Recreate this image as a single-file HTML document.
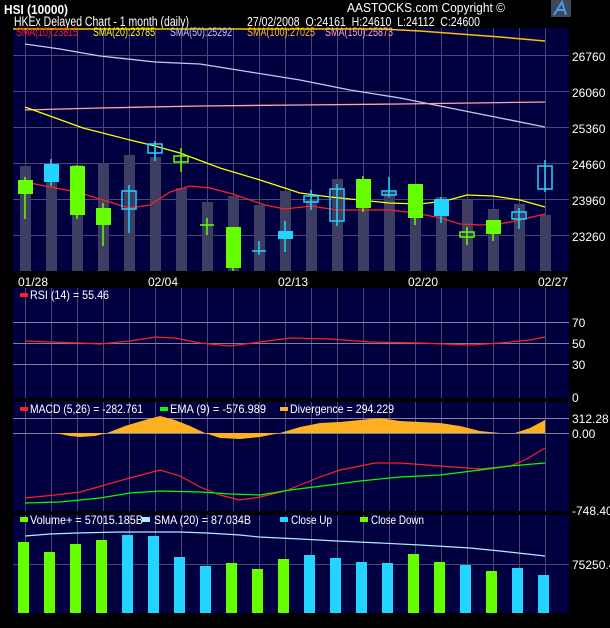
<!DOCTYPE html>
<html><head><meta charset="utf-8"><style>
html,body{margin:0;padding:0;background:#000;}
svg{display:block;font-family:"Liberation Sans",sans-serif;}
</style></head><body>
<svg width="610" height="628" viewBox="0 0 610 628" xmlns="http://www.w3.org/2000/svg">
<rect width="610" height="628" fill="#000"/>
<!-- header -->
<text x="4" y="14" fill="#fff" font-size="13" font-weight="bold" textLength="64" lengthAdjust="spacingAndGlyphs">HSI (10000)</text>
<text x="14" y="26" fill="#fff" font-size="13.5" textLength="175" lengthAdjust="spacingAndGlyphs">HKEx  Delayed Chart - 1 month (daily)</text>
<text x="347" y="12" fill="#fff" font-size="13" textLength="158" lengthAdjust="spacingAndGlyphs">AASTOCKS.com Copyright ©</text>
<rect x="551" y="0" width="20" height="17" fill="#3a4a5a"/>
<path d="M554 15 L562 2 L566 15 M557 10 L565 10" stroke="#4a9ae8" stroke-width="2" fill="none"/>
<text x="247" y="26" fill="#fff" font-size="13" textLength="233" lengthAdjust="spacingAndGlyphs" xml:space="preserve">27/02/2008  O:24161  H:24610  L:24112  C:24600</text>

<!-- panels -->
<rect x="13" y="28" width="556" height="243" fill="#000040"/>
<rect x="13" y="288" width="556" height="110" fill="#000040"/>
<rect x="13" y="402" width="556" height="109" fill="#000040"/>
<rect x="13" y="515" width="556" height="98" fill="#000040"/>

<g stroke="#4a4a70" stroke-width="1">
<path d="M25.5 28V271M51.5 28V271M77.5 28V271M103.5 28V271M129.5 28V271M155.5 28V271M181.5 28V271M207.5 28V271M233.5 28V271M259.5 28V271M285.5 28V271M311.5 28V271M337.5 28V271M363.5 28V271M389.5 28V271M415.5 28V271M441.5 28V271M467.5 28V271M493.5 28V271M519.5 28V271M545.5 28V271"/>
<path d="M25.5 288V398M51.5 288V398M77.5 288V398M103.5 288V398M129.5 288V398M155.5 288V398M181.5 288V398M207.5 288V398M233.5 288V398M259.5 288V398M285.5 288V398M311.5 288V398M337.5 288V398M363.5 288V398M389.5 288V398M415.5 288V398M441.5 288V398M467.5 288V398M493.5 288V398M519.5 288V398M545.5 288V398"/>
<path d="M25.5 402V511M51.5 402V511M77.5 402V511M103.5 402V511M129.5 402V511M155.5 402V511M181.5 402V511M207.5 402V511M233.5 402V511M259.5 402V511M285.5 402V511M311.5 402V511M337.5 402V511M363.5 402V511M389.5 402V511M415.5 402V511M441.5 402V511M467.5 402V511M493.5 402V511M519.5 402V511M545.5 402V511"/>
<path d="M25.5 515V613M51.5 515V613M77.5 515V613M103.5 515V613M129.5 515V613M155.5 515V613M181.5 515V613M207.5 515V613M233.5 515V613M259.5 515V613M285.5 515V613M311.5 515V613M337.5 515V613M363.5 515V613M389.5 515V613M415.5 515V613M441.5 515V613M467.5 515V613M493.5 515V613M519.5 515V613M545.5 515V613"/>
<path d="M13 55.5H569M13 91.5H569M13 127.5H569M13 163.5H569M13 199.5H569M13 235.5H569"/>
<path d="M13 564.5H569"/>
</g>
<g stroke="#8080a0"><path d="M13 322.5H569M13 343.5H569M13 364.5H569M13 418.5H569M13 433.5H569"/></g>

<!-- volume in main -->
<g fill="#3e3e62">
<rect x="20" y="166" width="11" height="105"/><rect x="46" y="181" width="11" height="90"/><rect x="72" y="165" width="11" height="106"/><rect x="98" y="163" width="11" height="108"/><rect x="124" y="155" width="11" height="116"/><rect x="150" y="157" width="11" height="114"/><rect x="176" y="188" width="11" height="83"/><rect x="202" y="202" width="11" height="69"/><rect x="228" y="196" width="11" height="75"/><rect x="254" y="205" width="11" height="66"/><rect x="280" y="191" width="11" height="80"/><rect x="306" y="199" width="11" height="72"/><rect x="332" y="179" width="11" height="92"/><rect x="358" y="190" width="11" height="81"/><rect x="384" y="192" width="11" height="79"/><rect x="410" y="197" width="11" height="74"/><rect x="436" y="197" width="11" height="74"/><rect x="462" y="200" width="11" height="71"/><rect x="488" y="209" width="11" height="62"/><rect x="514" y="204" width="11" height="67"/><rect x="540" y="215" width="11" height="56"/>
</g>

<!-- MAs -->
<polyline fill="none" stroke="#ffc000" stroke-width="1.5" points="13,29 380,29 420,31 460,34 500,37 545,41"/>
<polyline fill="none" stroke="#c8c8f0" stroke-width="1.3" points="25,44 60,49 100,56 155,62 200,64 250,72 300,80 350,90 400,98 430,104 460,110 500,118 545,127"/>
<polyline fill="none" stroke="#ffa8a8" stroke-width="1.3" points="25,110 100,108 200,106 300,105 400,104 545,102"/>
<polyline fill="none" stroke="#ffff00" stroke-width="1.3" points="25,107 83,128 130,140 155,146 180,153 220,168 260,180 300,193 330,197 360,200 389,203 420,204 445,201 467,195 493,196 520,200 545,207"/>
<polyline fill="none" stroke="#ff2020" stroke-width="1.3" points="25,182 50,187 77,192 103,200 129,208 150,205 170,192 190,186 210,188 233,194 250,200 265,205 285,209 311,206 337,210 363,210 389,210 415,213 441,218 460,224 480,225 500,224 520,220 545,214"/>

<!-- candles -->
<g stroke-width="1.5">
<path d="M25 177V219" stroke="#66ff00"/><rect x="18" y="180" width="15" height="14" fill="#66ff00"/>
<path d="M51 159V186" stroke="#22d4ff"/><rect x="44" y="164" width="15" height="18" fill="#22d4ff"/>
<path d="M77 165V219" stroke="#66ff00"/><rect x="70" y="166" width="15" height="49" fill="#66ff00"/>
<path d="M103 203V246" stroke="#66ff00"/><rect x="96" y="208" width="15" height="17" fill="#66ff00"/>
<path d="M129 185V233" stroke="#22d4ff"/><rect x="122" y="191" width="14" height="18" fill="none" stroke="#22d4ff"/>
<path d="M155 141V161" stroke="#22d4ff"/><rect x="148" y="144" width="14" height="9" fill="none" stroke="#22d4ff"/>
<path d="M181 148V172" stroke="#66ff00"/><rect x="174" y="156" width="14" height="6" fill="none" stroke="#66ff00"/>
<path d="M207 218V235M200 225H214" stroke="#66ff00"/>
<path d="M233 265V271" stroke="#66ff00"/><rect x="226" y="227" width="15" height="41" fill="#66ff00"/>
<path d="M259 241V255M252 251H266" stroke="#22d4ff"/>
<path d="M285 221V252" stroke="#22d4ff"/><rect x="278" y="231" width="15" height="8" fill="#22d4ff"/>
<path d="M311 190V210" stroke="#22d4ff"/><rect x="304" y="196" width="14" height="6" fill="none" stroke="#22d4ff"/>
<path d="M337 184V226" stroke="#22d4ff"/><rect x="330" y="189" width="14" height="32" fill="none" stroke="#22d4ff"/>
<path d="M363 176V212" stroke="#66ff00"/><rect x="356" y="179" width="15" height="29" fill="#66ff00"/>
<path d="M389 177V197" stroke="#22d4ff"/><rect x="382" y="191" width="14" height="4" fill="none" stroke="#22d4ff"/>
<path d="M415 184V225" stroke="#66ff00"/><rect x="408" y="184" width="15" height="34" fill="#66ff00"/>
<path d="M441 197V223" stroke="#22d4ff"/><rect x="434" y="199" width="15" height="17" fill="#22d4ff"/>
<path d="M467 227V245" stroke="#66ff00"/><rect x="460" y="232" width="14" height="5" fill="none" stroke="#66ff00"/>
<path d="M493 220V241" stroke="#66ff00"/><rect x="486" y="220" width="15" height="14" fill="#66ff00"/>
<path d="M519 208V229" stroke="#22d4ff"/><rect x="512" y="212" width="14" height="7" fill="none" stroke="#22d4ff"/>
<path d="M545 160V192" stroke="#22d4ff"/><rect x="538" y="166" width="14" height="23" fill="none" stroke="#22d4ff"/>
</g>

<!-- main legend -->
<g font-size="11.5">
<text x="16" y="36" fill="#ff2020" textLength="62" lengthAdjust="spacingAndGlyphs">SMA(10):23815</text>
<text x="93" y="36" fill="#ffff00" textLength="62" lengthAdjust="spacingAndGlyphs">SMA(20):23785</text>
<text x="170" y="36" fill="#c8c8f0" textLength="62" lengthAdjust="spacingAndGlyphs">SMA(50):25292</text>
<text x="247" y="36" fill="#ffc000" textLength="68" lengthAdjust="spacingAndGlyphs">SMA(100):27025</text>
<text x="325" y="36" fill="#ffa8a8" textLength="68" lengthAdjust="spacingAndGlyphs">SMA(150):25873</text>
</g>

<!-- axis labels -->
<g fill="#fff" font-size="12">
<text x="572" y="61">26760</text><text x="572" y="97">26060</text><text x="572" y="133">25360</text>
<text x="572" y="169">24660</text><text x="572" y="205">23960</text><text x="572" y="241">23260</text>
<text x="18" y="286">01/28</text><text x="148" y="286">02/04</text><text x="278" y="286">02/13</text><text x="408" y="286">02/20</text><text x="538" y="286">02/27</text>
<text x="572" y="327">70</text><text x="572" y="348">50</text><text x="572" y="369">30</text><text x="572" y="402">0</text>
<text x="572" y="423">312.28</text><text x="572" y="438">0.00</text><text x="572" y="515">-748.40</text>
<text x="572" y="569">75250.4</text>
</g>

<!-- RSI -->
<rect x="20" y="293" width="8" height="4" fill="#ff2020"/>
<text x="30" y="299" fill="#fff" font-size="12" textLength="79" lengthAdjust="spacingAndGlyphs">RSI (14)  = 55.46</text>
<polyline fill="none" stroke="#ff2020" stroke-width="1.2" points="25,341 50,342 80,343 100,344 130,341 155,337 175,338 200,343 230,346 260,342 290,338 330,339 370,342 420,343 470,345 500,343 530,340 545,337"/>

<!-- MACD -->
<rect x="20" y="407" width="8" height="4" fill="#ff2020"/>
<text x="30" y="413" fill="#fff" font-size="12" textLength="113" lengthAdjust="spacingAndGlyphs">MACD (5,26) = -282.761</text>
<rect x="160" y="407" width="8" height="4" fill="#00ff00"/>
<text x="170" y="413" fill="#fff" font-size="12" textLength="96" lengthAdjust="spacingAndGlyphs">EMA (9) = -576.989</text>
<rect x="280" y="407" width="8" height="4" fill="#ffb020"/>
<text x="290" y="413" fill="#fff" font-size="12" textLength="104" lengthAdjust="spacingAndGlyphs">Divergence = 294.229</text>
<polygon fill="#ffb020" points="30,433 55,433 70,436 80,437 95,436 107,433 125,426 145,420 160,416 175,420 190,426 205,433 220,438 240,439 260,437 280,433 300,427 320,423 340,422 360,420 380,418 400,421 420,422 440,423 460,426 480,431 500,433 515,433 530,428 545,420 545,433"/>
<polyline fill="none" stroke="#ff2020" stroke-width="1.2" points="25,498 55,495 80,492 105,485 130,478 160,470 180,476 200,487 220,495 240,500 260,497 285,491 300,485 320,477 340,470 375,463 400,463 440,466 480,469 510,466 525,460 545,448"/>
<polyline fill="none" stroke="#00ff00" stroke-width="1.2" points="25,503 60,502 100,498 130,493 160,491 200,492 230,494 260,495 290,490 330,485 360,481 400,477 440,475 480,470 510,466 545,463"/>

<!-- Volume panel -->
<rect x="20" y="517" width="8" height="5" fill="#66ff00"/>
<text x="30" y="524" fill="#fff" font-size="12" textLength="113" lengthAdjust="spacingAndGlyphs">Volume+  = 57015.185B</text>
<rect x="142" y="517" width="8" height="5" fill="#aaf0ff"/>
<text x="154" y="524" fill="#fff" font-size="12" textLength="97" lengthAdjust="spacingAndGlyphs">SMA (20)  = 87.034B</text>
<rect x="280" y="517" width="8" height="5" fill="#22d4ff"/>
<text x="291" y="524" fill="#fff" font-size="12" textLength="41" lengthAdjust="spacingAndGlyphs">Close Up</text>
<rect x="360" y="517" width="8" height="5" fill="#66ff00"/>
<text x="371" y="524" fill="#fff" font-size="12" textLength="53" lengthAdjust="spacingAndGlyphs">Close Down</text>
<g>
<rect x="18" y="542" width="11" height="71" fill="#66ff00"/><rect x="44" y="552" width="11" height="61" fill="#66ff00"/><rect x="70" y="544" width="11" height="69" fill="#66ff00"/><rect x="96" y="540" width="11" height="73" fill="#66ff00"/><rect x="122" y="535" width="11" height="78" fill="#22d4ff"/><rect x="148" y="536" width="11" height="77" fill="#22d4ff"/><rect x="174" y="557" width="11" height="56" fill="#22d4ff"/><rect x="200" y="566" width="11" height="47" fill="#22d4ff"/><rect x="226" y="563" width="11" height="50" fill="#66ff00"/><rect x="252" y="569" width="11" height="44" fill="#66ff00"/><rect x="278" y="559" width="11" height="54" fill="#66ff00"/><rect x="304" y="555" width="11" height="58" fill="#22d4ff"/><rect x="330" y="558" width="11" height="55" fill="#22d4ff"/><rect x="356" y="562" width="11" height="51" fill="#22d4ff"/><rect x="382" y="563" width="11" height="50" fill="#22d4ff"/><rect x="408" y="554" width="11" height="59" fill="#66ff00"/><rect x="434" y="562" width="11" height="51" fill="#66ff00"/><rect x="460" y="565" width="11" height="48" fill="#22d4ff"/><rect x="486" y="571" width="11" height="42" fill="#66ff00"/><rect x="512" y="568" width="11" height="45" fill="#22d4ff"/><rect x="538" y="575" width="11" height="38" fill="#22d4ff"/>
</g>
<polyline fill="none" stroke="#aaf0ff" stroke-width="1.2" points="25,536 50,534 77,533 120,532 180,532 207,533 240,535 259,537 300,539 337,541 380,543 420,545 470,548 500,551 545,556"/>
</svg>
</body></html>
